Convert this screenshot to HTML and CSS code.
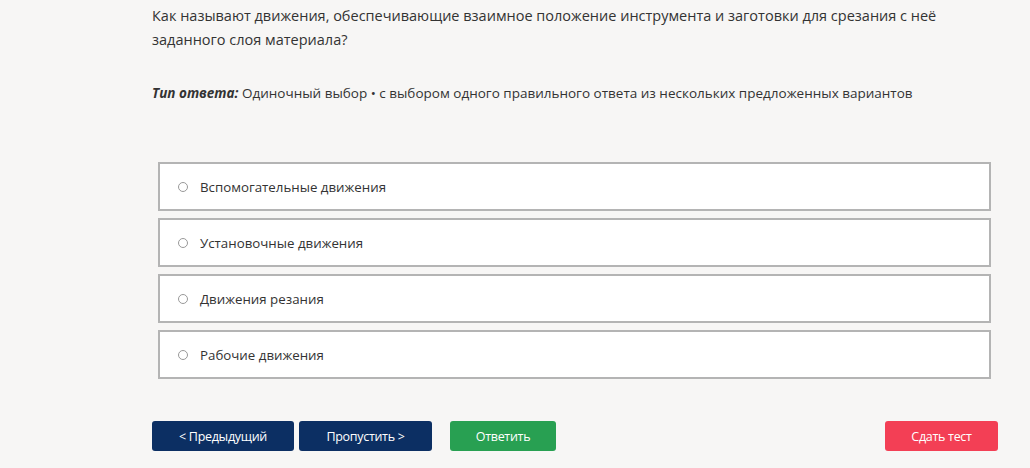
FILE: index.html
```html
<!DOCTYPE html>
<html lang="ru">
<head>
<meta charset="utf-8">
<link rel="stylesheet" href="styles.css">
</head>
<body>
<div class="main">
  <div class="question">Как называют движения, обеспечивающие взаимное положение инструмента и заготовки для срезания с неё заданного слоя материала?</div>
  <div class="type"><em>Тип ответа:</em> Одиночный выбор • с выбором одного правильного ответа из нескольких предложенных вариантов</div>
  <div class="options">
    <label class="option"><span class="radio"></span><span>Вспомогательные движения</span></label>
    <label class="option"><span class="radio"></span><span>Установочные движения</span></label>
    <label class="option"><span class="radio"></span><span>Движения резания</span></label>
    <label class="option"><span class="radio"></span><span>Рабочие движения</span></label>
  </div>
  <div class="actions">
    <button class="btn btn-navy btn-prev">&lt; Предыдущий</button>
    <button class="btn btn-navy btn-skip">Пропустить &gt;</button>
    <button class="btn btn-green">Ответить</button>
    <span class="spacer"></span>
    <button class="btn btn-red">Сдать тест</button>
  </div>
</div>
</body>
</html>
```
FILE: styles.css
```css
html, body {
  margin: 0;
  padding: 0;
  background: #f7f6f5;
}
body {
  font-family: "Open Sans", "Noto Sans", sans-serif;
  color: #333;
}
.main {
  width: 846px;
  margin-left: 152px;
  padding-top: 4px;
}
.question {
  font-size: 14.5px;
  line-height: 24px;
  color: #333;
  width: 820px;
}
.type {
  margin-top: 31px;
  font-size: 13.5px;
  line-height: 20px;
  color: #333;
}
.type em {
  font-weight: 700;
  font-style: italic;
}
.options {
  margin: 59px 7px 0 6px;
  display: flex;
  flex-direction: column;
  gap: 7px;
}
.option {
  display: flex;
  align-items: center;
  height: 44px;
  padding-top: 1px;
  border: 2px solid #b4b4b4;
  background: #fff;
  padding-left: 18px;
  font-size: 13.3px;
  color: #333;
}
.radio {
  width: 8px;
  height: 8px;
  border: 1px solid #999;
  border-radius: 50%;
  margin-right: 12px;
}
.actions {
  display: flex;
  margin-top: 42px;
  align-items: center;
}
.btn {
  height: 30px;
  border: none;
  border-radius: 3px;
  color: #fff;
  font-family: "Open Sans", "Noto Sans", sans-serif;
  font-size: 12.5px;
  letter-spacing: -0.3px;
  padding: 0;
}
.btn-navy { background: #0c2f63; }
.btn-prev { width: 142px; }
.btn-skip { width: 133px; margin-left: 5px; }
.btn-green { background: #28a052; width: 106px; margin-left: 18px; }
.spacer { flex: 1; }
.btn-red { background: #f33f55; width: 113px; }
```
